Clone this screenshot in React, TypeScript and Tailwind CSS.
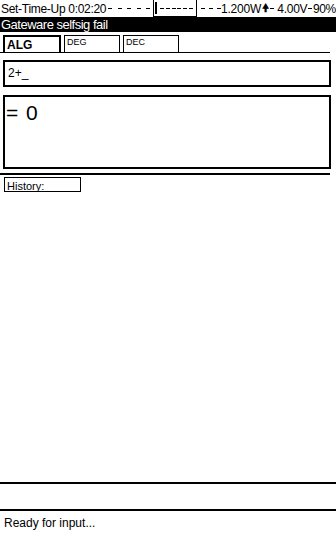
import React from 'react';

const font = { fontFamily: '"Liberation Sans", "DejaVu Sans", sans-serif' };

const Dashes = ({ n, w }: { n: number; w: string }) => (
  <div className={`flex items-center justify-between ${w}`}>
    {Array.from({ length: n }).map((_, i) => (
      <div key={i} className="w-[4px] h-[1px] bg-black" />
    ))}
  </div>
);

const StatusBar = () => (
  <div className="flex items-center h-[17px] text-[12px] leading-none tracking-[-0.3px] whitespace-nowrap text-black">
    <span className="pl-[1px] w-[104px]">Set-Time-Up 0:02:20</span>
    <div className="ml-[4px]">
      <Dashes n={5} w="w-[42px]" />
    </div>
    <div className="relative flex items-center h-[17px] w-[47px] border border-black border-t-0 ml-[3px] pl-[6px] pr-[3px]">
      <div className="absolute left-[1px] top-[2px] bottom-[2px] w-[2px] bg-black" />
      <Dashes n={6} w="w-full" />
    </div>
    <div className="ml-[4px]">
      <Dashes n={3} w="w-[20px]" />
    </div>
    <span className="tracking-[-0.2px]">1.200W</span>
    <span className="text-[11px] font-bold mx-[1px]">🠝</span>
    <div className="w-[5px] h-[1px] bg-black mr-[3px]" />
    <span className="tracking-[-0.3px]">4.00V</span>
    <div className="w-[4px] h-[1px] bg-black mx-[1px]" />
    <span className="tracking-[-0.3px]">90%</span>
  </div>
);

const App = () => {
  const tabs = ['ALG', 'DEG', 'DEC'];
  return (
    <div className="w-[336px] h-[536px] bg-white text-black flex flex-col overflow-hidden" style={font}>
      <StatusBar />
      <div className="bg-black text-white h-[15px] text-[13px] leading-[15px] tracking-[-0.5px] pl-[1px]">
        Gateware selfsig fail
      </div>
      <div className="flex items-end gap-[3px] pl-[3px] mt-[3px] mr-[6px] border-b border-black">
        {tabs.map((t, i) => (
          <div
            key={t}
            className={
              i === 0
                ? 'w-[58px] h-[17px] border-2 border-b-0 border-black text-[12px] font-bold leading-none pl-[2px] pt-[2px]'
                : 'w-[56px] h-[17px] border border-b-0 border-black text-[9px] leading-none pl-[2px] pt-[2px]'
            }
          >
            {t}
          </div>
        ))}
      </div>
      <div className="ml-[3px] mr-[5px] mt-[7px] h-[27px] border-2 border-black text-[12px] leading-none pl-[3px] pt-[5px]">
        2+_
      </div>
      <div className="ml-[3px] mr-[5px] mt-[8px] h-[74px] border-2 border-black text-[21px] leading-none pl-[1px] pt-[5px] tracking-[1px]">
        = 0
      </div>
      <div className="mt-[4px] mr-[6px] border-t-2 border-black" />
      <div className="ml-[4px] mt-[2px] w-[77px] h-[15px] border border-black text-[11px] leading-none pl-[2px] pt-[3px]">
        <span className="underline">History:</span>
      </div>
      <div className="flex-1" />
      <div className="border-t-2 border-black" />
      <div className="h-[25px]" />
      <div className="border-t-2 border-black" />
      <div className="h-[25px] text-[12px] leading-none pl-[4px] pt-[6px]">Ready for input...</div>
    </div>
  );
};

export default App;
